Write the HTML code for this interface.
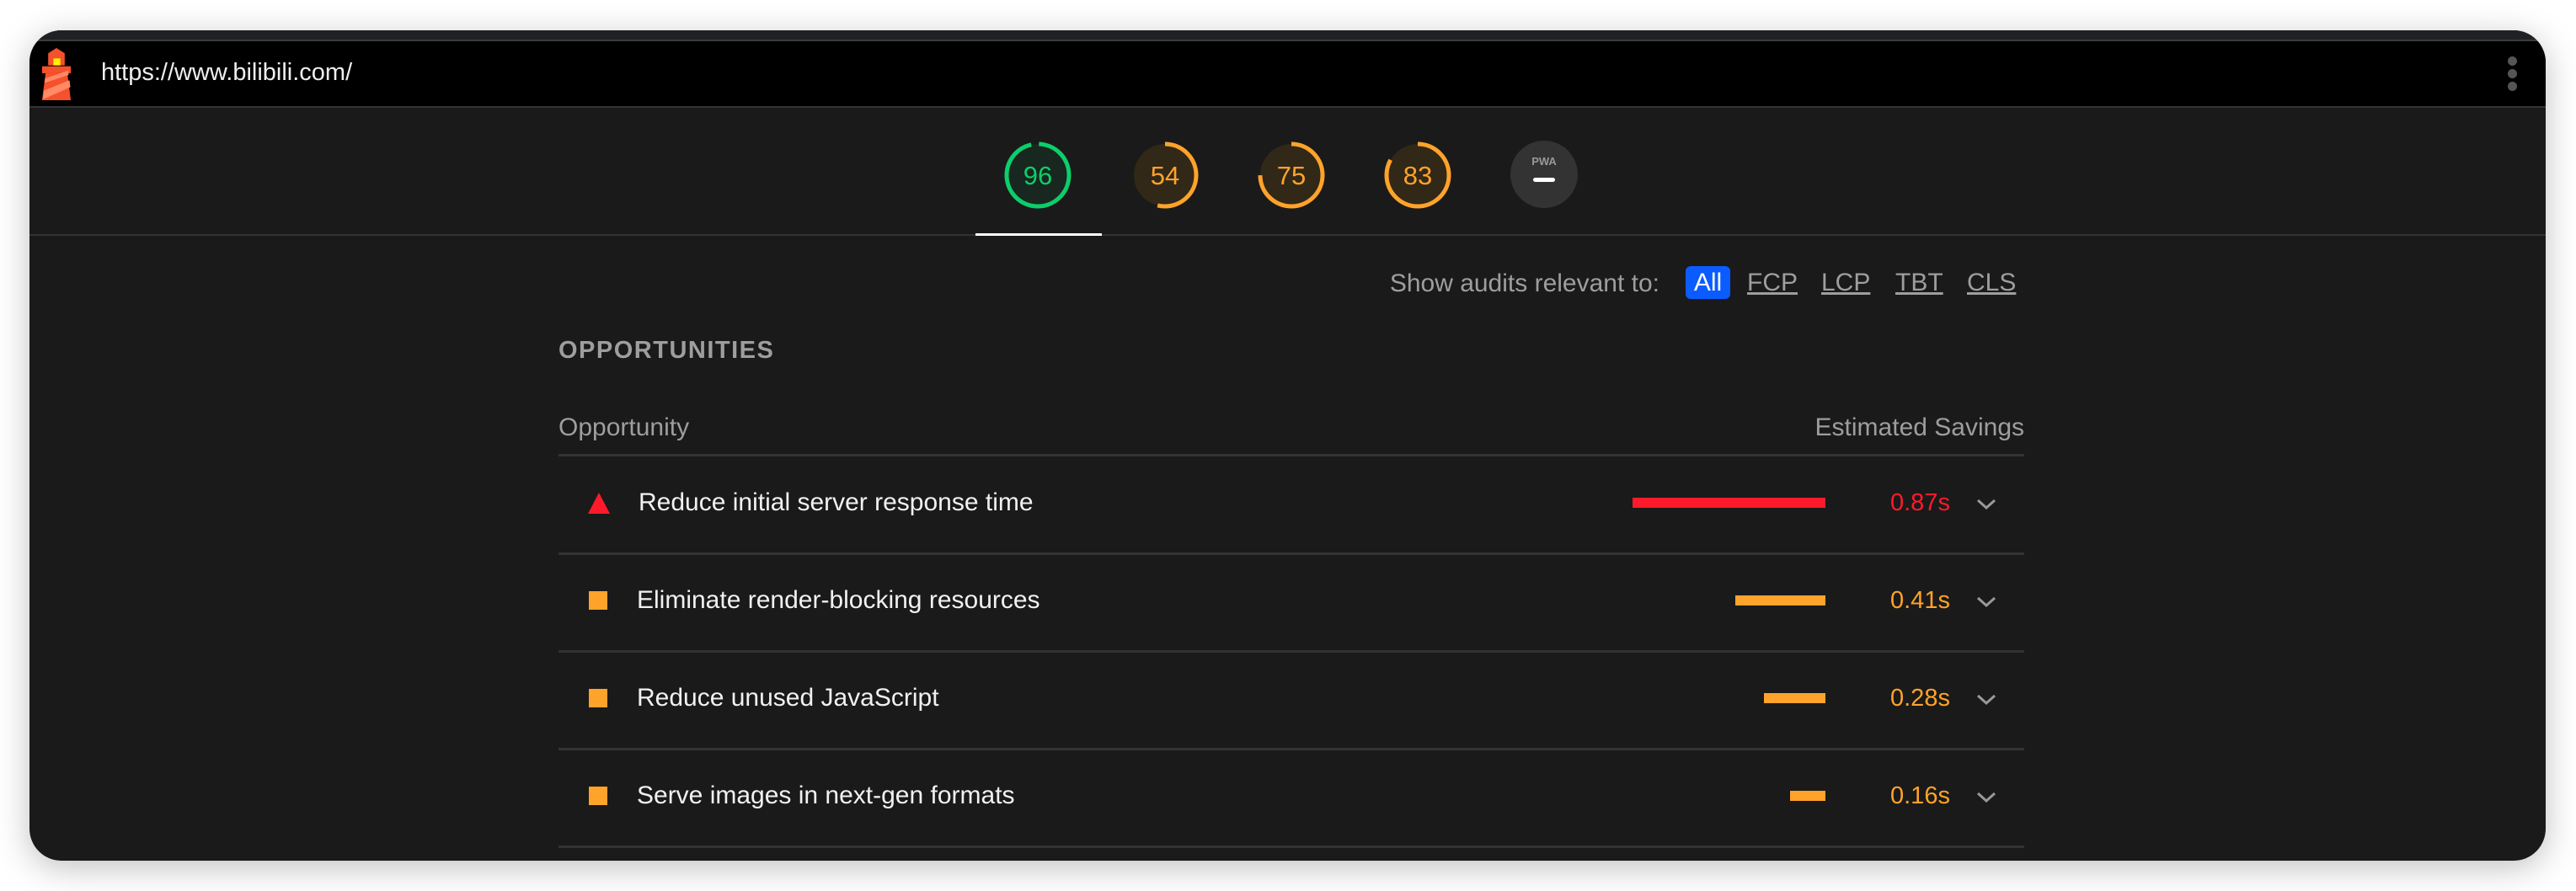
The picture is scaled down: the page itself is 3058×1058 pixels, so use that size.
<!DOCTYPE html>
<html><head><meta charset="utf-8"><style>
*{margin:0;padding:0;box-sizing:border-box}
html,body{width:3058px;height:1058px;background:#fff;overflow:hidden;font-family:"Liberation Sans",sans-serif}
.win{position:absolute;left:35px;top:36px;width:2987px;height:986px;border-radius:38px;background:#1a1a1a;overflow:hidden;box-shadow:0 8px 40px rgba(0,0,0,0.25)}
.a{position:absolute}
.t{position:absolute;white-space:nowrap}
.line{position:absolute;left:628px;width:1740px;height:3px;background:#333}
</style></head><body>
<div class="win">
 <div class="a" style="left:0;top:0;width:100%;height:11px;background:#202124"></div>
 <div class="a" style="left:0;top:11px;width:100%;height:2px;background:#3c3c3c"></div>
 <div class="a" style="left:0;top:13px;width:100%;height:78px;background:#000"></div>
 <div class="a" style="left:0;top:90px;width:100%;height:2px;background:#333"></div>
 <svg class="a" style="left:14px;top:21px" width="36" height="62" viewBox="0 0 33 60">
  <polygon points="16.5,0 26,6 26,20 7,20 7,6" fill="#f4512c"/>
  <rect x="13" y="12" width="8" height="8" fill="#fff200"/>
  <rect x="0" y="21" width="33" height="8" fill="#f4512c"/>
  <polygon points="4,29 29,29 33,60 0,60" fill="#f4512c"/>
  <polygon points="3.5,35 30,26 30.5,31 3,40" fill="#ff8a65"/>
  <polygon points="2,49 31.5,37 32.5,45 1,59" fill="#ff8a65"/>
 </svg>
 <div class="t" style="left:85px;top:30px;font-size:29px;color:#eee;line-height:40px">https://www.bilibili.com/</div>
 <div class="a" style="left:2942px;top:31px;width:11px;height:11px;border-radius:50%;background:#555"></div>
 <div class="a" style="left:2942px;top:46px;width:11px;height:11px;border-radius:50%;background:#555"></div>
 <div class="a" style="left:2942px;top:61px;width:11px;height:11px;border-radius:50%;background:#555"></div>

 <svg class="a" style="left:0;top:0" width="2987" height="260">
  <g font-family="Liberation Sans, sans-serif" font-size="31" text-anchor="middle">
   <circle cx="1197" cy="172" r="37" fill="#0cce6b" fill-opacity="0.08" stroke="#0cce6b" stroke-width="5" stroke-dasharray="223 10" transform="rotate(-88 1197 172)"/>
   <text x="1197" y="183" fill="#0cce6b">96</text>
   <circle cx="1348" cy="172" r="37" fill="#ffa400" fill-opacity="0.1"/>
   <circle cx="1348" cy="172" r="37" fill="none" stroke="#ffa32b" stroke-width="5" stroke-dasharray="125 300" transform="rotate(-90 1348 172)"/>
   <text x="1348" y="183" fill="#ffa32b">54</text>
   <circle cx="1498" cy="172" r="37" fill="#ffa400" fill-opacity="0.1"/>
   <circle cx="1498" cy="172" r="37" fill="none" stroke="#ffa32b" stroke-width="5" stroke-dasharray="174 300" transform="rotate(-90 1498 172)"/>
   <text x="1498" y="183" fill="#ffa32b">75</text>
   <circle cx="1648" cy="172" r="37" fill="#ffa400" fill-opacity="0.1"/>
   <circle cx="1648" cy="172" r="37" fill="none" stroke="#ffa32b" stroke-width="5" stroke-dasharray="193 300" transform="rotate(-90 1648 172)"/>
   <text x="1648" y="183" fill="#ffa32b">83</text>
   <circle cx="1798" cy="171" r="40" fill="#333"/>
   <text x="1798" y="160" fill="#999" font-size="13" font-weight="bold">PWA</text>
   <rect x="1785" y="175" width="26" height="5" rx="2.5" fill="#fff"/>
  </g>
 </svg>
 <div class="a" style="left:0;top:242px;width:100%;height:2px;background:#333"></div>
 <div class="a" style="left:1123px;top:241px;width:150px;height:3px;background:#fff"></div>

 <div class="t" style="right:1052px;top:281px;font-size:30px;color:#9e9e9e;line-height:40px">Show audits relevant to:</div>
 <div class="a" style="left:1966px;top:280px;width:53px;height:39px;border-radius:6px;background:#0b5cff"></div>
 <div class="t" style="left:1966px;top:280px;width:53px;text-align:center;font-size:30px;color:#fff;line-height:39px">All</div>
 <div class="t" style="left:2039px;top:281px;font-size:30px;color:#9e9e9e;line-height:38px;text-decoration:underline">FCP</div>
 <div class="t" style="left:2127px;top:281px;font-size:30px;color:#9e9e9e;line-height:38px;text-decoration:underline">LCP</div>
 <div class="t" style="left:2215px;top:281px;font-size:30px;color:#9e9e9e;line-height:38px;text-decoration:underline">TBT</div>
 <div class="t" style="left:2300px;top:281px;font-size:30px;color:#9e9e9e;line-height:38px;text-decoration:underline">CLS</div>

 <div class="t" style="left:628px;top:360px;font-size:29px;font-weight:bold;letter-spacing:1.5px;color:#9e9e9e;line-height:40px">OPPORTUNITIES</div>
 <div class="t" style="left:628px;top:452px;font-size:30px;color:#9e9e9e;line-height:40px">Opportunity</div>
 <div class="t" style="right:619px;top:452px;font-size:30px;color:#9e9e9e;line-height:40px">Estimated Savings</div>
 <div class="line" style="top:503px"></div>

 <svg class="a" style="left:663px;top:549px" width="26" height="26"><polygon points="13,0 26,25 0,25" fill="#ff1a2b"/></svg>
 <div class="t" style="left:723px;top:541px;font-size:30px;color:#f1f1f1;line-height:40px">Reduce initial server response time</div>
 <div class="a" style="left:1903px;top:555px;width:229px;height:12px;background:#ff1a2b"></div>
 <div class="t" style="left:2209px;top:541px;font-size:29px;color:#ff1a2b;line-height:40px">0.87s</div>
 <svg class="a" style="left:2311px;top:556px" width="24" height="14"><polyline points="2,2 12,11 22,2" fill="none" stroke="#999" stroke-width="3"/></svg>
 <div class="line" style="top:620px"></div>

 <div class="a" style="left:664px;top:666px;width:22px;height:22px;background:#ffa32b"></div>
 <div class="t" style="left:721px;top:657px;font-size:30px;color:#f1f1f1;line-height:40px">Eliminate render-blocking resources</div>
 <div class="a" style="left:2025px;top:671px;width:107px;height:12px;background:#ffa32b"></div>
 <div class="t" style="left:2209px;top:657px;font-size:29px;color:#ffa32b;line-height:40px">0.41s</div>
 <svg class="a" style="left:2311px;top:672px" width="24" height="14"><polyline points="2,2 12,11 22,2" fill="none" stroke="#999" stroke-width="3"/></svg>
 <div class="line" style="top:736px"></div>

 <div class="a" style="left:664px;top:782px;width:22px;height:22px;background:#ffa32b"></div>
 <div class="t" style="left:721px;top:773px;font-size:30px;color:#f1f1f1;line-height:40px">Reduce unused JavaScript</div>
 <div class="a" style="left:2059px;top:787px;width:73px;height:12px;background:#ffa32b"></div>
 <div class="t" style="left:2209px;top:773px;font-size:29px;color:#ffa32b;line-height:40px">0.28s</div>
 <svg class="a" style="left:2311px;top:788px" width="24" height="14"><polyline points="2,2 12,11 22,2" fill="none" stroke="#999" stroke-width="3"/></svg>
 <div class="line" style="top:852px"></div>

 <div class="a" style="left:664px;top:898px;width:22px;height:22px;background:#ffa32b"></div>
 <div class="t" style="left:721px;top:889px;font-size:30px;color:#f1f1f1;line-height:40px">Serve images in next-gen formats</div>
 <div class="a" style="left:2090px;top:903px;width:42px;height:12px;background:#ffa32b"></div>
 <div class="t" style="left:2209px;top:889px;font-size:29px;color:#ffa32b;line-height:40px">0.16s</div>
 <svg class="a" style="left:2311px;top:904px" width="24" height="14"><polyline points="2,2 12,11 22,2" fill="none" stroke="#999" stroke-width="3"/></svg>
 <div class="line" style="top:968px"></div>
</div>
</body></html>
